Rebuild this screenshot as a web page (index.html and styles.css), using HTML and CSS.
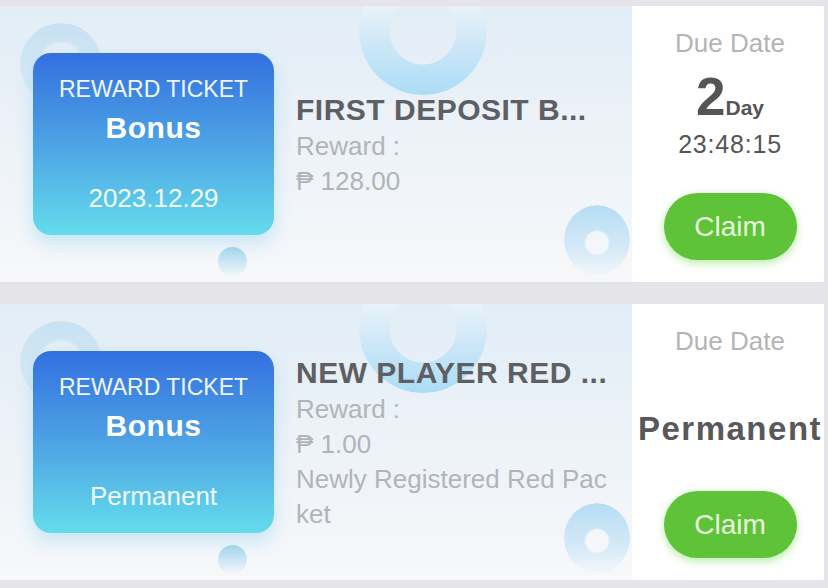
FILE: index.html
```html
<!DOCTYPE html>
<html lang="en">
<head>
    <meta charset="UTF-8">
    <meta name="viewport" content="width=device-width, initial-scale=1.0">
    <title>Rewards</title>
    <link rel="stylesheet" href="styles.css">
</head>
<body>
    <div class="reward-list">
        <div class="reward-card">
            <div class="reward-main">
                <span class="deco deco-ring-left"></span>
                <span class="deco deco-ring-top"></span>
                <span class="deco deco-ring-small"></span>
                <span class="deco deco-dot"></span>

                <div class="ticket">
                    <div class="ticket-label">REWARD TICKET</div>
                    <div class="ticket-type">Bonus</div>
                    <div class="ticket-date">2023.12.29</div>
                </div>
                <div class="reward-info">
                    <div class="reward-title">FIRST DEPOSIT B...</div>
                    <div class="reward-line">Reward :</div>
                    <div class="reward-line">₱ 128.00</div>
                </div>
            </div>
            <div class="reward-side">
                <div class="due-label">Due Date</div>
                <div class="due-value">
                    <div class="countdown">
                        <div class="countdown-days">2<span class="days-unit">Day</span></div>
                        <div class="countdown-time">23:48:15</div>
                    </div>
                </div>
                <button class="claim-btn">Claim</button>
            </div>
        </div>

        <div class="reward-card">
            <div class="reward-main">
                <span class="deco deco-ring-left"></span>
                <span class="deco deco-ring-top"></span>
                <span class="deco deco-ring-small"></span>
                <span class="deco deco-dot"></span>

                <div class="ticket">
                    <div class="ticket-label">REWARD TICKET</div>
                    <div class="ticket-type">Bonus</div>
                    <div class="ticket-date">Permanent</div>
                </div>
                <div class="reward-info">
                    <div class="reward-title">NEW PLAYER RED ...</div>
                    <div class="reward-line">Reward :</div>
                    <div class="reward-line">₱ 1.00</div>
                    <div class="reward-line reward-desc">Newly Registered Red Packet</div>
                </div>
            </div>
            <div class="reward-side">
                <div class="due-label">Due Date</div>
                <div class="due-value">
                    <div class="due-permanent">Permanent</div>
                </div>
                <button class="claim-btn">Claim</button>
            </div>
        </div>
    </div>
</body>
</html>
```

FILE: styles.css
```css
:root {
    --page-bg: #e4e4e9;
    --title-color: #5e5f63;
    --muted-color: #b2b4b8;
    --claim-green: #5ec338;
}

* {
    margin: 0;
    padding: 0;
    box-sizing: border-box;
}

body {
    font-family: 'Liberation Sans', Arial, sans-serif;
    background-color: var(--page-bg);
    overflow: hidden;
}

.reward-list {
    display: flex;
    flex-direction: column;
    gap: 22px;
    padding: 6px 4px 0 0;
}

.reward-card {
    display: flex;
    height: 276px;
}

/* left part: ticket + texts */
.reward-main {
    position: relative;
    flex: 1;
    display: flex;
    align-items: center;
    gap: 22px;
    padding-left: 33px;
    overflow: hidden;
    background: linear-gradient(180deg, #e2edf6 0%, #eef3f8 55%, #f7f8fa 100%);
}

.deco {
    position: absolute;
    border-radius: 50%;
}

.deco-ring-left {
    left: 20px;
    top: 17px;
    width: 82px;
    height: 82px;
    background: linear-gradient(180deg, rgba(175, 215, 240, 0.55), rgba(205, 228, 245, 0.3));
    -webkit-mask: radial-gradient(circle, transparent 20px, #000 24px);
    mask: radial-gradient(circle, transparent 20px, #000 24px);
}

.deco-ring-top {
    left: 359px;
    top: -39px;
    width: 128px;
    height: 128px;
    background: linear-gradient(180deg, rgba(240, 248, 253, 0.5) 30%, rgba(195, 228, 247, 0.75) 62%, #abdcf6 100%);
    -webkit-mask: radial-gradient(circle, transparent 33px, #000 34px);
    mask: radial-gradient(circle, transparent 33px, #000 34px);
}

.deco-ring-small {
    left: 564px;
    top: 199px;
    width: 66px;
    height: 70px;
    background: linear-gradient(180deg, #b6ddf5 0%, #d6eaf7 65%, rgba(240, 246, 251, 0.5) 100%);
    -webkit-mask: radial-gradient(circle at 50% 54%, transparent 11px, #000 13px);
    mask: radial-gradient(circle at 50% 54%, transparent 11px, #000 13px);
}

.deco-dot {
    left: 218px;
    top: 241px;
    width: 29px;
    height: 29px;
    background: linear-gradient(180deg, #a5d7ee 0%, rgba(205, 232, 246, 0.1) 100%);
}

.ticket {
    position: relative;
    flex: 0 0 241px;
    height: 182px;
    display: flex;
    flex-direction: column;
    align-items: center;
    padding-top: 20px;
    border-radius: 18px;
    color: #fff;
    background: linear-gradient(180deg, #3370e0 0%, #4da3e4 50%, #64dcec 100%);
    box-shadow: 0 8px 18px rgba(90, 190, 235, 0.3);
}

.ticket-label {
    font-size: 23px;
    line-height: 32px;
    color: #f0f7ff;
}

.ticket-type {
    margin-top: 3px;
    font-size: 30px;
    font-weight: bold;
    line-height: 40px;
    letter-spacing: 0.5px;
}

.ticket-date {
    margin-top: 33px;
    font-size: 26px;
    line-height: 34px;
    color: #effbff;
}

.reward-info {
    position: relative;
    flex: 0 0 316px;
    display: flex;
    flex-direction: column;
    justify-content: center;
}

.reward-title {
    font-size: 30px;
    font-weight: bold;
    line-height: 39px;
    letter-spacing: 0.5px;
    color: var(--title-color);
    white-space: nowrap;
}

.reward-line {
    font-size: 26px;
    line-height: 35px;
    color: var(--muted-color);
}

.reward-desc {
    word-break: break-all;
}

/* right part: due date + claim */
.reward-side {
    flex: 0 0 192px;
    display: flex;
    flex-direction: column;
    align-items: center;
    padding: 20px 0 22px 4px;
    background-color: #fff;
}

.due-label {
    font-size: 26px;
    line-height: 34px;
    color: #b4b4b6;
}

.due-value {
    flex: 1;
    display: flex;
    flex-direction: column;
    justify-content: center;
    align-items: center;
}

.countdown {
    display: flex;
    flex-direction: column;
    align-items: center;
    padding-bottom: 24px;
    color: #555558;
}

.countdown-days {
    font-size: 53px;
    line-height: 52px;
    font-weight: bold;
}

.days-unit {
    font-size: 21px;
    line-height: 1;
}

.countdown-time {
    margin-top: 6px;
    font-size: 25px;
    line-height: 30px;
    letter-spacing: 0.8px;
}

.due-permanent {
    padding-top: 8px;
    font-size: 33px;
    font-weight: bold;
    line-height: 40px;
    letter-spacing: 1.5px;
    color: #58585b;
}

.claim-btn {
    width: 133px;
    height: 67px;
    border: none;
    border-radius: 34px;
    font-family: inherit;
    font-size: 28px;
    color: #e9f8df;
    background-color: var(--claim-green);
    box-shadow: 0 3px 9px rgba(100, 210, 60, 0.45);
}
```
